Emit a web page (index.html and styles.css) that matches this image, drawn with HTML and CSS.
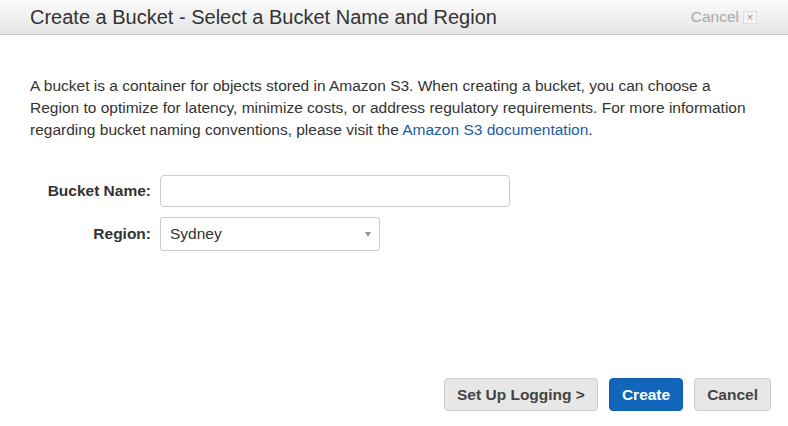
FILE: index.html
```html
<!DOCTYPE html>
<html>
<head>
<meta charset="utf-8">
<link rel="stylesheet" href="styles.css">
</head>
<body>
<div class="dialog">
  <div class="header">
    <h1 class="title">Create a Bucket - Select a Bucket Name and Region</h1>
    <div class="close">Cancel <span class="xbox">×</span></div>
  </div>
  <div class="content">
    <p class="intro">A bucket is a container for objects stored in Amazon S3. When creating a bucket, you can choose a Region to optimize for latency, minimize costs, or address regulatory requirements. For more information regarding bucket naming conventions, please visit the <a class="link" href="#">Amazon S3 documentation</a>.</p>
    <div class="form">
      <div class="row">
        <label class="label">Bucket Name:</label>
        <div class="input"></div>
      </div>
      <div class="row">
        <label class="label">Region:</label>
        <div class="select"><span>Sydney</span><span class="caret"></span></div>
      </div>
    </div>
  </div>
  <div class="footer">
    <button class="btn">Set Up Logging &gt;</button>
    <button class="btn primary">Create</button>
    <button class="btn">Cancel</button>
  </div>
</div>
</body>
</html>
```

FILE: styles.css
```css
html, body { margin: 0; padding: 0; background: #fff; }
body { font-family: "Liberation Sans", Arial, Helvetica, sans-serif; color: #333; }
.dialog { height: 426px; display: flex; flex-direction: column; }
.header {
  height: 34px;
  border-bottom: 1px solid #c9c9c9;
  background: linear-gradient(#fbfbfb, #e5e5e5);
  display: flex; align-items: center; justify-content: space-between;
  padding: 0 31px 0 30px;
}
.title { margin: 0; font-size: 20px; font-weight: normal; color: #333; }
.close { font-size: 15.5px; color: #aaa; display: flex; align-items: center; gap: 4px; }
.xbox {
  display: inline-flex; align-items: center; justify-content: center;
  width: 12px; height: 11px; border: 1px solid #ddd; background: #f4f4f4;
  font-size: 11px; color: #999; line-height: 1;
}
.content { padding: 0 30px; flex: 1; }
.intro { margin: 40px 0 0; font-size: 15.5px; line-height: 22px; color: #333; }
.link { color: #1a5ba6; text-decoration: none; }
.form { margin-top: 34px; display: flex; flex-direction: column; gap: 10px; }
.row { display: flex; align-items: center; gap: 9px; }
.label { width: 121px; text-align: right; font-weight: bold; font-size: 15.5px; color: #333; }
.input {
  width: 348px; height: 30px; border: 1px solid #ccc; border-radius: 4px; background: #fff;
}
.select {
  width: 218px; height: 32px; border: 1px solid #ccc; border-radius: 3px; background: #fff;
  display: flex; align-items: center; justify-content: space-between;
  font-size: 15.5px; color: #333;
}
.select span:first-child { padding-left: 9px; }
.caret {
  width: 0; height: 0; margin-right: 8px;
  border-left: 3px solid transparent; border-right: 3px solid transparent; border-top: 5px solid #999;
}
.footer { display: flex; justify-content: flex-end; gap: 11px; padding: 0 17px 15px 0; }
.btn {
  height: 33px; padding: 0 12px; border: 1px solid #ccc; border-radius: 4px;
  background: #e7e7e7; font-family: inherit; font-weight: bold; font-size: 15.5px; color: #444;
}
.primary { background: #1166bb; border-color: #0f5fae; color: #fff; }
```
